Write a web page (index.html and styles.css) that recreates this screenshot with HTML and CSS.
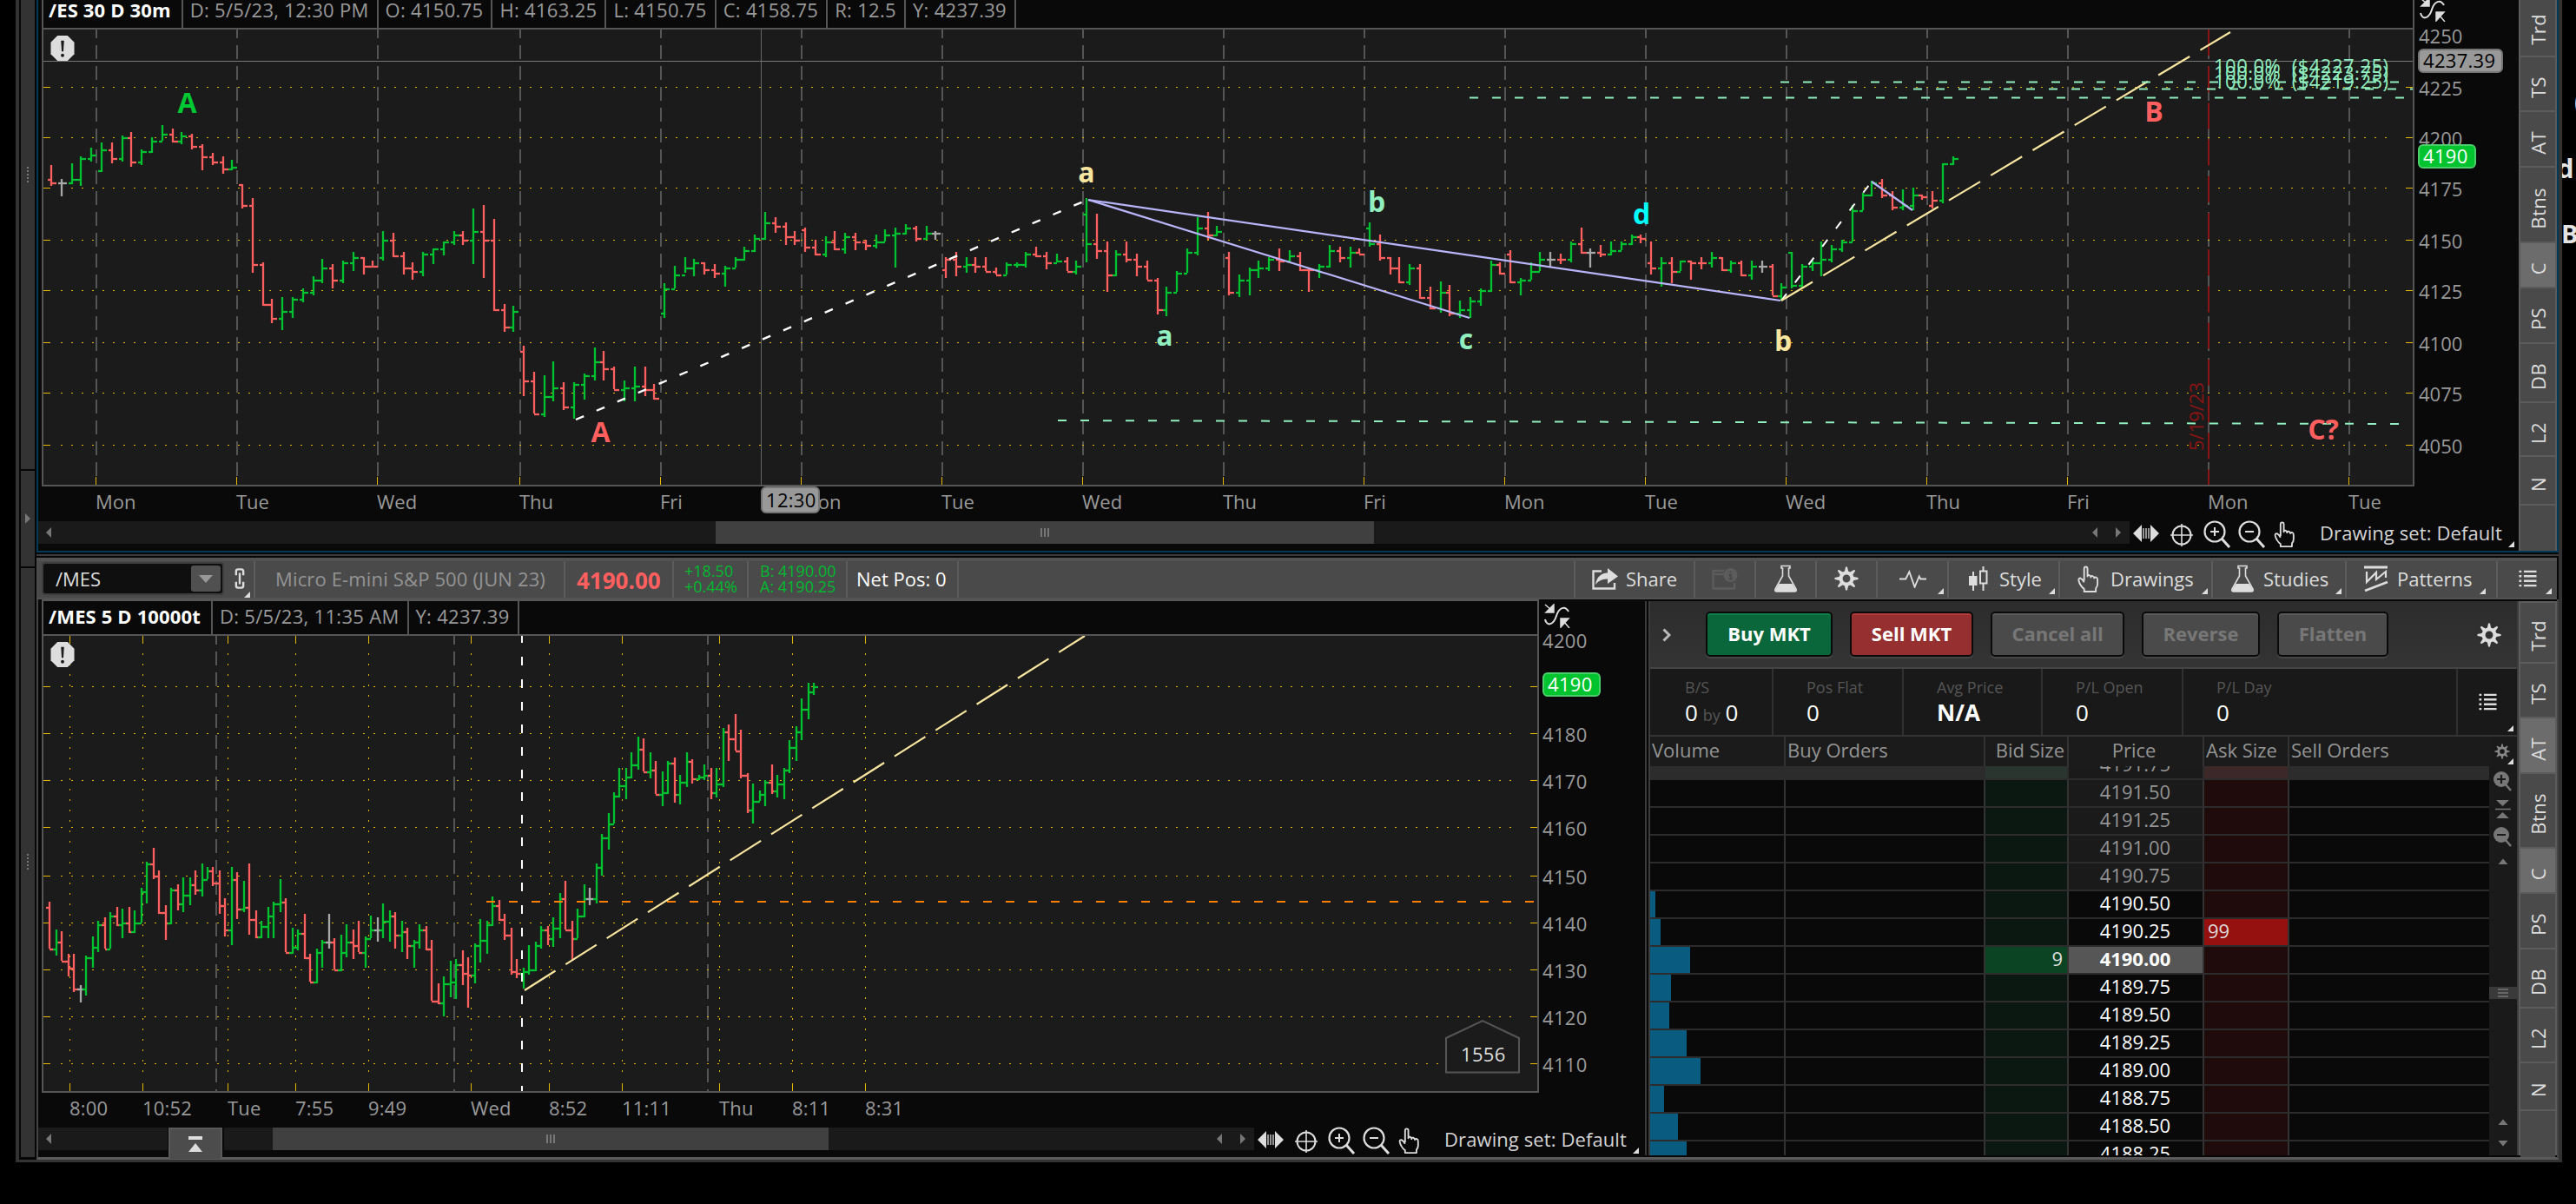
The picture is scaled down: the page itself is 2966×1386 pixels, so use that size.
FILE: index.html
```
<!DOCTYPE html>
<html lang="en">
<head>
    <meta charset="UTF-8" />
    <meta name="viewport" content="width=device-width, initial-scale=1.0">
    <title>Charts</title>
    <link rel="stylesheet" href="styles.css">
</head>
<body>
    <svg class="sprite">
        <symbol id="i-curve" viewBox="0 0 30 28">
            <path d="M1 18 C3 27 11 24 14 14 S24 2 28 9" fill="none" stroke="#ddd" stroke-width="2"/>
            <path d="M1 1 L8 7 M11 1 V10 H2 Z" fill="#ddd" stroke="#ddd" stroke-width="1.5"/>
            <path d="M29 28 L23 21 M19 17 H28 L19 27 Z" fill="#ddd" stroke="#ddd" stroke-width="1.5"/>
        </symbol>
        <symbol id="i-pan" viewBox="0 0 30 24">
            <path d="M0 12 L10 2 V22 Z M30 12 L20 2 V22 Z" fill="#ddd"/>
            <path d="M12 6 V18 M15 6 V18 M18 6 V18" stroke="#ddd" stroke-width="1.3"/>
        </symbol>
        <symbol id="i-cross" viewBox="0 0 26 26">
            <circle cx="13" cy="13" r="10.5" fill="none" stroke="#ddd" stroke-width="2"/>
            <path d="M13 0 V26 M0 13 H26" stroke="#ddd" stroke-width="1.6"/>
        </symbol>
        <symbol id="i-zin" viewBox="0 0 32 32">
            <circle cx="13" cy="13" r="11.5" fill="none" stroke="#ddd" stroke-width="2.2"/>
            <path d="M21 21 L30 31" stroke="#ddd" stroke-width="3"/>
            <path d="M13 8 V18 M8 13 H18" stroke="#ddd" stroke-width="2"/>
        </symbol>
        <symbol id="i-zout" viewBox="0 0 32 32">
            <circle cx="13" cy="13" r="11.5" fill="none" stroke="#ddd" stroke-width="2.2"/>
            <path d="M21 21 L30 31" stroke="#ddd" stroke-width="3"/>
            <path d="M8 13 H18" stroke="#ddd" stroke-width="2"/>
        </symbol>
        <symbol id="i-hand" viewBox="0 0 26 32">
            <path d="M8 18 V4 Q8 1.500 10 1.500 T12 4 V13 Q12 11 14 11.500 T16 14 Q16 12 18 12.500 T20 15 Q21 13.500 22.500 14 T24 17 V22 Q24 25 22 27 V31 H8 V28 Q3 24 1.500 18 Q1 15 3.500 15 Q6 16 8 20" fill="none" stroke="#ddd" stroke-width="2" stroke-linejoin="round"/>
        </symbol>
        <symbol id="i-flask" viewBox="0 0 28 32">
            <path d="M9 1.500 H19 V4 H17.500 V13 L26 28 Q27 31 24 31 H4 Q1 31 2 28 L10.500 13 V4 H9 Z" fill="none" stroke="#ddd" stroke-width="1.600"/>
            <path d="M6.500 22 H21.500 L26 29 Q26 31 24 31 H4 Q2 31 2 29 Z" fill="#ddd"/>
        </symbol>
        <symbol id="i-gear" viewBox="-15 -15 30 30">
            <path d="M-2.500 -8 L-1 -14.500 H1 L2.500 -8 Z" id="tooth"/>
            <use href="#tooth" transform="rotate(45)"/><use href="#tooth" transform="rotate(90)"/>
            <use href="#tooth" transform="rotate(135)"/><use href="#tooth" transform="rotate(180)"/>
            <use href="#tooth" transform="rotate(225)"/><use href="#tooth" transform="rotate(270)"/>
            <use href="#tooth" transform="rotate(315)"/>
            <circle r="7" fill="none" stroke="currentColor" stroke-width="4.500"/>
        </symbol>
        <symbol id="i-list" viewBox="0 0 22 22">
            <path d="M0 2 H3 M0 8 H3 M0 14 H3 M0 20 H3 M6 2 H22 M6 8 H22 M6 14 H22 M6 20 H22" stroke="#ddd" stroke-width="2.600"/>
        </symbol>
        <symbol id="i-alert" viewBox="0 0 28 30">
            <path d="M8 0 H20 L28 8 V22 L20 30 H8 L0 22 V8 Z" fill="#ddd"/>
            <path d="M12.200 6 H15.800 L15 19 H13 Z" fill="#1b1b1b"/>
            <circle cx="14" cy="23.500" r="2" fill="#1b1b1b"/>
        </symbol>
    </svg>

    <div class="behind">
        <span class="behind-paren">(</span>
        <span class="behind-d">d</span>
        <span class="behind-b">B</span>
    </div>

    <div class="window">
        <div class="rail">
            <div class="rail-part rail-a"><i class="grip"></i></div>
            <div class="rail-part rail-b"><i class="tri-right"></i></div>
            <div class="rail-part rail-c"><i class="grip"></i></div>
        </div>

        <div class="main">
            <div class="panel panel-es">
                <div class="chart chart-es">
                    <div class="chart-head">
                        <div class="cells">
                            <span class="cell title">/ES 30 D 30m</span>
                            <span class="cell">D: 5/5/23, 12:30 PM</span>
                            <span class="cell">O: 4150.75</span>
                            <span class="cell">H: 4163.25</span>
                            <span class="cell">L: 4150.75</span>
                            <span class="cell">C: 4158.75</span>
                            <span class="cell">R: 12.5</span>
                            <span class="cell">Y: 4237.39</span>
                        </div>
                        <svg class="curve"><use href="#i-curve"/></svg>
                    </div>
                    <svg class="plot" id="es" viewBox="44 32 2856 568"></svg>
                    <div class="foot">
                        <div class="track">
                            <i class="tri-left first"></i>
                            <div class="thumb thumb-es"><i class="grip-v"></i></div>
                            <i class="tri-left"></i><i class="tri-right"></i>
                        </div>
                        <div class="tools">
                            <svg class="pan"><use href="#i-pan"/></svg>
                            <svg class="cross"><use href="#i-cross"/></svg>
                            <svg class="zoom"><use href="#i-zin"/></svg>
                            <svg class="zoom"><use href="#i-zout"/></svg>
                            <svg class="hand"><use href="#i-hand"/></svg>
                        </div>
                        <span class="set corner">Drawing set: Default</span>
                    </div>
                </div>
                <div class="tabs tabs-es">
                    <div class="tab"><span>Trd</span></div>
                    <div class="tab"><span>TS</span></div>
                    <div class="tab"><span>AT</span></div>
                    <div class="tab"><span>Btns</span></div>
                    <div class="tab on"><span>C</span></div>
                    <div class="tab"><span>PS</span></div>
                    <div class="tab"><span>DB</span></div>
                    <div class="tab"><span>L2</span></div>
                    <div class="tab"><span>N</span></div>
                    <div class="tab"></div>
                </div>
            </div>

            <div class="splitter"></div>

            <div class="toolbar">
                <div class="tb tb-symbol">
                    <div class="symbol">/MES<span class="drop"></span></div>
                </div>
                <div class="tb tb-link corner">
                    <svg class="link" viewBox="0 0 12 26"><path d="M1.500 9 V4 Q1.500 1.500 4 1.500 H8 Q10.500 1.500 10.500 4 V9 M1.500 17 V22 Q1.500 24.500 4 24.500 H8 Q10.500 24.500 10.500 22 V17 M6 6 V20" fill="none" stroke="#ddd" stroke-width="2.600"/></svg>
                </div>
                <div class="tb tb-name">Micro E-mini S&amp;P 500 (JUN 23)</div>
                <div class="tb tb-last">4190.00</div>
                <div class="tb tb-change">+18.50<br>+0.44%</div>
                <div class="tb tb-ba">B: 4190.00<br>A: 4190.25</div>
                <div class="tb tb-pos">Net Pos: 0</div>
                <div class="tb tb-space"></div>
                <div class="tb tb-share">
                    <svg class="share" viewBox="0 0 30 25"><path d="M11 3.500 H1.500 V23.500 H26 V17" fill="none" stroke="#ddd" stroke-width="2.400"/><path d="M4 19 Q6 6 18 5.500 V0 L30 9.500 L18 18 V12.500 Q9 12 4 19 Z" fill="#ddd"/></svg>
                    Share
                </div>
                <div class="tb tb-icon">
                    <svg class="info" viewBox="0 0 30 25"><path d="M14 3 H1.500 V23.500 H26 V17 M2 7 H14" fill="none" stroke="#5c5c5c" stroke-width="2.400"/><circle cx="21.500" cy="8" r="8" fill="#5c5c5c"/><path d="M21.500 3 V5 M20 7.500 H22 V12 M19.500 12.500 H24" stroke="#4a4a4a" stroke-width="2"/></svg>
                </div>
                <div class="tb tb-icon"><svg class="flask"><use href="#i-flask"/></svg></div>
                <div class="tb tb-icon"><svg class="gear"><use href="#i-gear"/></svg></div>
                <div class="tb tb-pulse corner">
                    <svg class="pulse" viewBox="0 0 30 20"><path d="M0 10 H7 L11 2 L17 19 L22 7 L23.500 10 H30" fill="none" stroke="#ddd" stroke-width="1.800"/></svg>
                </div>
                <div class="tb tb-style corner">
                    <svg class="candles" viewBox="0 0 22 28"><path d="M5 6 V28 M16.500 0 V28" stroke="#ddd" stroke-width="2"/><rect x="0" y="11" width="9.500" height="11" fill="#ddd"/><rect x="13" y="5.500" width="7.500" height="14" fill="#4a4a4a" stroke="#ddd" stroke-width="2"/></svg>
                    Style
                </div>
                <div class="tb tb-draw corner"><svg class="hand"><use href="#i-hand"/></svg>Drawings</div>
                <div class="tb tb-studies corner"><svg class="flask"><use href="#i-flask"/></svg>Studies</div>
                <div class="tb tb-patterns corner">
                    <svg class="patt" viewBox="0 0 28 32"><path d="M0 3 H27 M1 30 L27 20" stroke="#ddd" stroke-width="2.800"/><path d="M3 8 V20 L14 9 V17 L25 8 V15" fill="none" stroke="#ddd" stroke-width="2.200"/></svg>
                    Patterns
                </div>
                <div class="tb tb-menu corner"><svg class="list"><use href="#i-list"/></svg></div>
            </div>

            <div class="bottom">
                <div class="chart chart-mes">
                    <div class="chart-head">
                        <div class="cells">
                            <span class="cell title">/MES 5 D 10000t</span>
                            <span class="cell">D: 5/5/23, 11:35 AM</span>
                            <span class="cell">Y: 4237.39</span>
                        </div>
                        <svg class="curve"><use href="#i-curve"/></svg>
                    </div>
                    <svg class="plot" id="mes" viewBox="44 730 1850 568"></svg>
                    <div class="foot">
                        <div class="track track-short"><i class="tri-left first"></i></div>
                        <div class="totop"><i></i></div>
                        <div class="track track-mes">
                            <div class="thumb thumb-mes"><i class="grip-v"></i></div>
                            <i class="tri-left"></i><i class="tri-right"></i>
                        </div>
                        <div class="tools">
                            <svg class="pan"><use href="#i-pan"/></svg>
                            <svg class="cross"><use href="#i-cross"/></svg>
                            <svg class="zoom"><use href="#i-zin"/></svg>
                            <svg class="zoom"><use href="#i-zout"/></svg>
                            <svg class="hand"><use href="#i-hand"/></svg>
                        </div>
                        <span class="set corner">Drawing set: Default</span>
                    </div>
                </div>

                <div class="trader">
                    <div class="orders">
                        <svg class="chev" viewBox="0 0 10 16"><path d="M1.500 1.500 L8 8 L1.500 14.500" fill="none" stroke="#bbb" stroke-width="3"/></svg>
                        <button class="btn buy">Buy MKT</button>
                        <button class="btn sell">Sell MKT</button>
                        <button class="btn cancel">Cancel all</button>
                        <button class="btn reverse">Reverse</button>
                        <button class="btn flatten">Flatten</button>
                        <svg class="gear"><use href="#i-gear"/></svg>
                    </div>
                    <div class="stats">
                        <div class="stat"><label>B/S</label><p>0 <small>by</small> 0</p></div>
                        <div class="stat"><label>Pos Flat</label><p>0</p></div>
                        <div class="stat"><label>Avg Price</label><p><b>N/A</b></p></div>
                        <div class="stat"><label>P/L Open</label><p>0</p></div>
                        <div class="stat"><label>P/L Day</label><p>0</p></div>
                        <div class="stat-menu corner"><svg class="list"><use href="#i-list"/></svg></div>
                    </div>
                    <div class="ladder">
                        <div class="book">
                            <div class="row head">
                                <span>Volume</span><span>Buy Orders</span><span class="r">Bid Size</span>
                                <span class="c">Price</span><span>Ask Size</span><span>Sell Orders</span>
                            </div>
                            <div class="rows" id="rows"></div>
                        </div>
                        <div class="side">
                            <div class="side-gear corner"><svg class="gear"><use href="#i-gear"/></svg></div>
                            <svg class="side-icons" viewBox="0 0 32 448">
                                <g fill="#777">
                                    <circle cx="14" cy="15" r="9"/><path d="M18 20 L25 28" stroke="#777" stroke-width="2.500"/>
                                    <path d="M8 39 H23 L15.500 46 Z M8 60 H23 L15.500 53 Z M7 48.700 H25 V50.300 H7 Z"/>
                                    <circle cx="14" cy="79" r="9"/><path d="M18 84 L25 92" stroke="#777" stroke-width="2.500"/>
                                    <path d="M10.500 113 H21.500 L16 106.500 Z M10.500 413 H21.500 L16 406.500 Z M10.500 431 H21.500 L16 437.500 Z"/>
                                </g>
                                <path d="M9 15 H19 M14 10 V20 M9 79 H19" stroke="#1a1a1a" stroke-width="2.200"/>
                                <rect x="0" y="254" width="32" height="14" fill="#3a3a3a"/>
                                <path d="M10 257 H22 M10 261 H22 M10 265 H22" stroke="#777" stroke-width="1.500"/>
                            </svg>
                        </div>
                    </div>
                </div>

                <div class="tabs tabs-mes">
                    <div class="tab"><span>Trd</span></div>
                    <div class="tab"><span>TS</span></div>
                    <div class="tab on"><span>AT</span></div>
                    <div class="tab"><span>Btns</span></div>
                    <div class="tab on"><span>C</span></div>
                    <div class="tab"><span>PS</span></div>
                    <div class="tab"><span>DB</span></div>
                    <div class="tab"><span>L2</span></div>
                    <div class="tab"><span>N</span></div>
                    <div class="tab"></div>
                </div>
            </div>
        </div>
    </div>

    <script src="charts.js"></script>
</body>
</html>
```
FILE: charts.js
```
const UP = "#00c12f", DOWN = "#ff5f5f", FLAT = "#a8a8a8";
const MINT = "#90eebf", CREAM = "#f8e6a0", LILAC = "#b9b5fa", YELLOW = "#e6b800";

function even(v) {
    return Math.round(v / 2) * 2;
}

function line(x1, y1, x2, y2, color, width, extra) {
    return `<line x1="${x1}" y1="${y1}" x2="${x2}" y2="${y2}" stroke="${color}" stroke-width="${width}" ${extra || ""}/>`;
}

function text(x, y, str, color, extra) {
    return `<text x="${x}" y="${y}" fill="${color}" ${extra || ""}>${str}</text>`;
}

function badge(x, y, w, h, str, fill, edge, color) {
    return `<rect x="${x + 1}" y="${y + 1}" width="${w - 2}" height="${h - 2}" rx="5" fill="${fill}" stroke="${edge}" stroke-width="2"/>`
        + text(x + 6, y + h / 2 + 8, str, color, 'letter-spacing=".3"');
}

// bars: [high, low, close, color?], each bar opens at the previous close
function drawBars(x0, step, open, bars, toY) {
    let out = "";
    bars.forEach((b, i) => {
        const [hi, lo, close, force] = b;
        const x = even(x0 + i * step) + 1;
        const next = even(x0 + (i + 1) * step);
        const color = force || (close < open ? UP : close > open ? DOWN : FLAT);
        const yo = even(toY(open)) + 1, yc = even(toY(close)) + 1;
        out += line(x, even(toY(hi)), x, even(toY(lo)), color, 2.3);
        out += line(x - 4, yo, x, yo, color, 2.3);
        out += line(x, yc, Math.min(next - 2, x + 6), yc, color, 2.3);
        open = close;
    });
    return out;
}

/* ---------- /ES ---------- */
const days = [
    [58, 506, [[469,527,516],[504,557,516],[464,521,506],[444,527,447],[420,459,437]]],
    [116, 482, [[402,484,422],[402,463,447],[381,459,389],[376,473,457],[422,468,427],[390,434,400],[352,400,378],[366,403,398],[376,408,385],[380,424,412],[410,483,442],[430,466,458],[440,492,476],[450,483,471]]],
    [278, 520, [[520,590,579],[562,772,745],[742,865,858],[846,914,898],[837,934,878],[840,899,844],[813,855,824],[779,835,790],[730,801,755],[748,816,790],[735,801,740],[710,767,726],[724,777,750],[738,756,751]]],
    [440, 726, [[651,736,677],[660,726,721],[710,777,755],[742,791,765],[713,781,716],[700,748,702],[680,722,682],[655,692,661],[651,694,677],[591,744,653],[577,787,677],[621,879,873],[861,939,922],[866,939,878]]],
    [602, 990, [[975,1120,1074],[1048,1169,1167],[1062,1179,1118],[1019,1135,1093],[1077,1159,1148],[1080,1184,1083],[1057,1130,1059],[980,1076,1020],[989,1076,1039],[1034,1101,1098],[1073,1135,1093],[1033,1134,1088],[1033,1120,1098],[1086,1126,1123]]],
    [764, 882, [[798,900,814],[749,816,775],[725,772,755],[730,781,740],[739,776,760],[748,787,770],[751,811,755],[725,757,731],[699,735,707],[661,712,672],[597,676,628],[612,659,638],[626,694,667],[655,694,677]]],
    [926, 647, [[642,713,697],[676,722,716],[670,727,682],[655,705,702],[660,717,667],[660,705,682],[675,709,692],[665,704,680],[650,680,661],[645,755,657,UP],[631,663,642],[636,684,672],[640,679,657],[654,676,657]]],
    [1088, 760, [[724,787,731,DOWN],[714,779,750],[725,772,745],[724,772,750],[724,768,765],[757,776,775],[740,777,745],[739,757,745,UP],[710,756,716],[699,727,721],[714,763,740],[718,742,736],[724,767,765],[738,777,750]]],
    [1250, 603, [[562,743,687,UP],[606,729,706],[680,822,775],[705,781,716],[684,742,731],[716,779,750],[738,792,790],[783,890,873],[808,895,824],[767,826,770],[700,770,711],[616,722,642],[601,679,661],[636,670,653]]],
    [1414, 725, [[714,832,824],[774,840,790],[754,836,760],[738,787,755],[724,767,731],[704,767,736],[709,740,721],[714,767,760],[755,826,760,DOWN],[744,787,750],[694,756,706],[699,740,726],[699,757,711],[704,718,716]]],
    [1576, 642, [[626,698,687,UP],[665,738,726],[724,777,755],[724,801,795],[748,806,755],[748,845,838],[812,875,868],[797,885,824],[807,893,885],[850,900,873],[841,899,848],[813,866,819],[738,822,745],[740,777,770]]],
    [1738, 716, [[709,801,795],[785,836,790],[743,792,765],[714,768,731],[714,755,731],[718,747,732],[680,740,687],[645,718,711],[700,757,711],[690,726,716],[680,722,706],[680,709,687],[664,690,667],[663,685,672]]],
    [1900, 740, [[680,777,755],[726,811,740],[726,798,765],[734,767,736],[736,791,740],[728,763,741],[710,755,726],[724,767,760],[735,772,740],[735,782,775],[738,792,750],[738,772,750],[745,836,834],[802,851,808]]],
    [2062, 711, [[710,816,804,UP],[748,814,750],[738,767,740],[684,781,731],[690,742,702],[679,712,682],[577,684,594],[545,596,550],[510,555,515],[508,561,550],[540,592,584],[533,596,578],[528,592,548],[548,567,555]]],
    [2224, 579, [[541,591,564,DOWN],[460,575,461],[441,465,447]]]
];

function drawEs() {
    let s = `<rect x="49" y="33" width="2730" height="526" fill="#1b1b1b"/>`;
    const names = ["Mon","Tue","Wed","Thu","Fri","Mon","Tue","Wed","Thu","Fri","Mon","Tue","Wed","Thu","Fri","Mon","Tue"];
    const xs = [110,272,434,598,760,922,1084,1246,1408,1570,1732,1894,2056,2218,2380,2542,2704];
    const ys = [100,158,216,276,334,394,452,512];

    xs.forEach((x, i) => {
        s += line(x + 1, 34, x + 1, 549, "#555", 2, 'stroke-dasharray="16 8" stroke-dashoffset="6"');
        s += line(x + .5, 549, x + .5, 558, YELLOW, 1);
        s += text(x, 586, names[i], "#999");
    });
    s += text(2785, 50, "4250", "#999");
    ys.forEach((y, i) => {
        s += line(50, y + .5, 58, y + .5, YELLOW, 1);
        s += line(70, y + .5, 2750, y + .5, YELLOW, 1, 'stroke-dasharray="2 10"');
        s += line(2770, y + .5, 2778, y + .5, YELLOW, 1);
        s += text(2785, y + 10, 4225 - i * 25, "#999");
    });

    s += line(50, 70.5, 2778, 70.5, "#777", 1);
    s += line(876.5, 34, 876.5, 558, "#666", 1);
    days.forEach(d => s += drawBars(d[0], 11.6, d[1], d[2], v => v / 2.45 - .5));

    // expiration
    s += line(2543, 34, 2543, 558, "#8b1414", 2, 'stroke-dasharray="30 12.200"');
    s += text(0, 0, "5/19/23", "#8b1414", 'transform="translate(2537 519) rotate(-90)"');

    // drawings
    const dash = 'stroke-dasharray="10 16"';
    s += line(663, 483, 1252, 230, "#fff", 2.4, dash);
    s += line(2051, 346, 2155, 209, "#fff", 2, dash);
    s += line(1253, 230, 1692, 366, LILAC, 2.2);
    s += line(1253, 230, 2050, 346, LILAC, 2.2);
    s += line(2155, 209, 2202, 242, LILAC, 2.2);
    s += line(2051, 346, 2568, 37, CREAM, 2.2, 'stroke-dasharray="42 14.200"');
    s += line(2050, 94.500, 2764, 94.500, MINT, 2, dash);
    s += line(2203, 102.500, 2778, 102.500, MINT, 2, dash);
    s += line(1692, 112.500, 2770, 112.500, MINT, 2, dash);
    s += line(1218, 484, 2766, 488, MINT, 2, dash);
    const wide = 'letter-spacing=".5"';
    s += text(2549, 84, "100.0%&#160;&#160;($4227.25)", MINT, wide);
    s += text(2549, 92, "100.0%&#160;&#160;($4223.75)", MINT, wide);
    s += text(2549, 102, "100.0%&#160;&#160;($4219.25)", MINT, wide);

    [[215.5,129.5,"A","#00c832"],[691.5,509,"A",DOWN],[1251,209.5,"a",CREAM],[1341,398,"a",MINT],[1585,243.5,"b",MINT],
     [1688,401.5,"c",MINT],[1890,257.5,"d","#0ff"],[2053,403.5,"b",CREAM],[2480,139.5,"B",DOWN],[2675,505.5,"C?",DOWN]]
        .forEach(w => s += text(w[0], w[1], w[2], w[3], 'class="wave"'));

    s += `<rect x="49" y="33" width="2730" height="526" fill="none" stroke="#555" stroke-width="2"/>`;
    s += badge(2784, 56, 98, 28, "4237.39", "#999", "#757575", "#000");
    s += badge(2784, 166, 67, 28, "4190", "#00c42f", "#4ccf6b", "#fff");
    s += badge(876, 560, 68, 31, "12:30", "#999", "#757575", "#000");
    s += `<use href="#i-alert" x="58" y="41" width="28" height="29"/>`;
    document.getElementById("es").innerHTML = s;
}

/* ---------- /MES ---------- */
const ticksA = [[238,400,397],[334,424,373],[340,441,439],[418,497,463],[418,550,535],[526,586,535],[424,562,427],[358,467,391],[304,412,313],[292,400,397],
    [274,400,283],[256,322,313],[262,364,307],[256,346,337],[268,346,307],[190,310,201],[100,244,103],[52,160,145],[130,280,271],[250,370,307],
    [190,316,193],[178,268,241],[154,274,211],[154,250,175],[130,214,193],[106,220,157],[118,160,129],[118,184,169],[130,280,247],[226,358,331],
    [118,388,157],[136,298,259],[166,274,253],[106,352,295],[268,364,355],[304,364,320],[256,364,283],[238,364,241],[160,274,235],[226,412,409],
    [328,418,391],[334,406,343],[280,436,427],[418,514,511],[400,520,409],[370,466,373],[280,400,373],[364,472,469],[352,478,409],[316,430,373],
    [334,436,385],[304,412,409],[358,466,361],[286,364,331],[292,376,331],[244,364,304],[268,376,283],[274,400,349],[304,412,337],[328,436,385],
    [370,466,373],[316,400,331],[322,406,397],[370,580,577],[520,592,583],[496,634,517],[442,568,511],[436,574,451],[406,526,481],[430,604,487],
    [382,520,385],[298,448,364]];
const ticksB = [[868,1018,935],[874,988,882],[790,892,816],[802,874,865],[850,936,919],[898,1060,1045],[1006,1072,1051],[1032,1108,1045],[958,1060,1040],[946,1048,955],[892,970,901],
    [892,958,931],[862,964,895],[778,934,793],[736,904,901],[874,1010,931],[832,934,853],[748,862,796],[760,820,796],[676,814,685],[574,718,583],
    [502,628,535],[430,538,441],[346,448,403],[346,454,373],[292,382,331],[238,352,277],[244,358,355],[292,382,349],[322,436,433],[358,478,427],
    [322,434,325],[310,466,433],[370,472,391],[292,412,319],[316,400,379],[370,388,373],[334,388,367],[346,454,427],[346,448,397],[208,412,217],
    [196,322,241],[160,286,283],[214,382,370],[364,502,487],[400,538,457],[424,460,433],[388,478,391],[334,436,421],[370,448,397],[346,454,349],
    [250,364,271],[202,322,217],[106,250,142],[52,178,79],[52,94,61]];

function drawMes() {
    let s = `<rect x="49" y="731" width="1722" height="526" fill="#1b1b1b"/>`;
    const xs = [80,164,262,340,424,542,632,716,828,912,996];
    const names = ["8:00","10:52","Tue","7:55","9:49","Wed","8:52","11:11","Thu","8:11","8:31"];
    const ys = [790,844,898,952,1008,1062,1116,1170,1224];

    xs.forEach((x, i) => {
        s += line(x + .5, 732, x + .5, 741, YELLOW, 1);
        s += line(x + .5, 752, x + .5, 1234, YELLOW, 1, 'stroke-dasharray="2 10"');
        s += line(x + .5, 1247, x + .5, 1256, YELLOW, 1);
        s += text(x, 1284, names[i], "#999", 'letter-spacing=".2"');
    });
    [248,522,814].forEach(x => s += line(x + 1, 732, x + 1, 1256, "#555", 2, 'stroke-dasharray="16 8" stroke-dashoffset="6"'));
    s += text(1776, 746, "4200", "#999", 'letter-spacing=".3"');
    ys.forEach((y, i) => {
        s += line(50, y + .5, 58, y + .5, YELLOW, 1);
        s += line(70, y + .5, 1742, y + .5, YELLOW, 1, 'stroke-dasharray="2 10"');
        s += line(1762, y + .5, 1770, y + .5, YELLOW, 1);
        if (i > 0) s += text(1776, y + 10, 4190 - i * 10, "#999", 'letter-spacing=".3"');
    });

    const bars = ticksA.slice(0, -1).concat([[298, 448, 367]], ticksB.slice(1).map(b => b.map(v => v - 570)));
    s += drawBars(56.4, 6.985, 253, bars, v => 960 + v / 3 - .7);

    s += line(601, 730, 601, 1256, "#fff", 2, 'stroke-dasharray="10 16"');
    s += line(560, 1038, 1770, 1038, "#ff7f00", 2, 'stroke-dasharray="10 16"');
    s += line(604, 1140, 1249, 732, CREAM, 2.2, 'stroke-dasharray="42 14"');

    s += `<path d="M1665 1234.500 V1195 L1707 1175 L1749 1195 V1234.500 Z" fill="#1b1b1b" stroke="#555" stroke-width="2"/>`;
    s += text(1682, 1222, "1556", "#ddd", 'letter-spacing=".3"');
    s += `<rect x="49" y="731" width="1722" height="526" fill="none" stroke="#555" stroke-width="2"/>`;
    s += badge(1776, 774, 67, 28, "4190", "#00c42f", "#4ccf6b", "#fff");
    s += `<use href="#i-alert" x="58" y="739" width="28" height="29"/>`;
    document.getElementById("mes").innerHTML = s;
}

/* ---------- price ladder ---------- */
function drawLadder() {
    const volume = [0, 0, 0, 0, 0, 6, 12, 46, 24, 22, 42, 58, 16, 32, 42];
    document.getElementById("rows").innerHTML = volume.map((v, i) => {
        const price = (4191.75 - i * .25).toFixed(2);
        let cls = "row";
        if (i === 0) cls += " mark";
        if (i < 5) cls += " above";
        if (price === "4190.00") cls += " last";
        if (price === "4190.25") cls += " ask";
        const bid = price === "4190.00" ? "9" : "";
        const ask = price === "4190.25" ? "99" : "";
        return `<div class="${cls}"><span><i class="vol" style="width:${v}px"></i></span><span></span>`
            + `<span class="bid-cell r">${bid}</span><span class="price-cell c">${price}</span>`
            + `<span class="ask-cell">${ask}</span><span></span></div>`;
    }).join("");
}

drawEs();
drawMes();
drawLadder();
```
FILE: styles.css
```
*{
    box-sizing: border-box;
}
body{
    margin: 0;
    background: #000;
    width: 2966px;
    height: 1386px;
    overflow: hidden;
    font-family: "Open Sans", "Noto Sans", sans-serif;
    font-size: 22px;
    color: #ddd;
}
svg{
    display: block;
    flex: none;
}
.sprite{
    position: absolute;
    width: 0;
    height: 0;
}
.behind{
    position: absolute;
    left: 2950px;
    top: 0;
    width: 16px;
    height: 300px;
    overflow: hidden;
    font-weight: bold;
    font-size: 31px;
    line-height: 40px;
    color: #e4e4e4;
}
.behind span{
    position: absolute;
    left: -6px;
}
.behind .behind-paren{
    left: 14px;
    top: 96px;
}
.behind .behind-d{
    top: 173px;
}
.behind .behind-b{
    left: -1px;
    top: 249px;
    font-size: 29px;
}

.window{
    display: flex;
    margin-left: 18px;
    width: 2932px;
    height: 1338px;
    padding-left: 2px;
    background: #070707;
    border: 4px solid #333;
    border-top: 0;
    border-bottom-width: 3px;
}
.rail{
    width: 16px;
    display: flex;
    flex-direction: column;
    gap: 2px;
    margin-right: 2px;
}
.rail-part{
    background: #333;
    display: flex;
    align-items: center;
    justify-content: center;
}
.rail-a{
    height: 540px;
    align-items: flex-start;
    padding-top: 192px;
}
.rail-b{
    height: 110px;
}
.rail-c{
    height: 678px;
    align-items: flex-start;
    padding-top: 329px;
}
.grip{
    width: 2px;
    height: 18px;
    background: repeating-linear-gradient(#777 0 2px, transparent 2px 4px);
}
.grip-v{
    width: 10px;
    height: 10px;
    background: repeating-linear-gradient(90deg, #777 0 2px, transparent 2px 4px);
}
.tri-right, .tri-left{
    border: 6px solid transparent;
    flex: none;
}
.tri-right{
    border-left-color: #777;
    border-right: 0;
}
.tri-left{
    border-right-color: #777;
    border-left: 0;
}
.main{
    width: 2904px;
    display: flex;
    flex-direction: column;
}
.panel{
    height: 636px;
    display: flex;
    border: 2px solid #003a58;
    border-top: 0;
    overflow: hidden;
    flex: none;
}

/* charts */
.chart{
    background: #090909;
    display: flex;
    flex-direction: column;
}
.chart-es{
    width: 2856px;
}
.chart-mes{
    width: 1850px;
    border-bottom: 0;
}
.chart-head{
    display: flex;
    height: 40px;
    flex: none;
    padding-left: 4px;
}
.chart-es .chart-head{
    margin-top: -8px;
}
.cells{
    display: flex;
    height: 42px;
    border: 2px solid #555;
    border-bottom: 0;
    margin-right: 6px;
}
.chart-es .cells{
    width: 2732px;
}
.chart-mes .cells{
    width: 1724px;
}
.cell{
    height: 38px;
    line-height: 34px;
    padding: 0 9px 0 8px;
    border-right: 2px solid #555;
    color: #999;
    letter-spacing: .3px;
    white-space: nowrap;
}
.cell.title{
    color: #fff;
    font-weight: bold;
    letter-spacing: .15px;
    padding: 0 12px 0 6px;
}
.curve{
    width: 30px;
    height: 28px;
    margin-top: 5px;
}
.plot{
    width: 100%;
    height: 568px;
}
.plot text{
    font-size: 22px;
}
.plot .wave{
    font-size: 32px;
    font-weight: bold;
    text-anchor: middle;
}
.foot{
    display: flex;
    height: 34px;
    flex: none;
    align-items: flex-start;
}
.track{
    width: 2408px;
    height: 26px;
    background: #1a1a1a;
    display: flex;
    align-items: center;
    padding-right: 10px;
}
.track .first{
    margin-left: 9px;
}
.track .thumb ~ .tri-right{
    margin-left: 21px;
}
.thumb{
    height: 26px;
    background: #404040;
    display: flex;
    align-items: center;
    justify-content: center;
    margin-right: auto;
}
.thumb-es{
    width: 758px;
    margin-left: 765px;
}
.track-short{
    width: 149px;
}
.totop{
    width: 62px;
    height: 36px;
    margin: 0 2px 0 1px;
    background: #4c4c4c;
    border: 2px solid #5a5a5a;
    border-bottom: 0;
    z-index: 1;
}
.totop i{
    display: block;
    width: 16px;
    margin: 8px auto 0;
    border-top: 4px solid #ddd;
}
.totop i::after{
    content: "";
    display: block;
    margin-top: 4px;
    border: 8px solid transparent;
    border-top: 0;
    border-bottom: 10px solid #ddd;
}
.track-mes{
    width: 1186px;
}
.thumb-mes{
    width: 640px;
    margin-left: 56px;
}
.tools{
    display: flex;
    height: 28px;
    align-items: center;
}
.tools svg{
    margin: 0 5px;
}
.tools .pan{
    width: 30px;
    height: 24px;
    margin: 0 6px 0 4px;
}
.tools .cross{
    width: 26px;
    height: 26px;
    margin: 4px 7px 0;
}
.tools .zoom{
    width: 32px;
    height: 32px;
    margin: 2px 3px 0 5px;
}
.tools .hand{
    width: 25px;
    height: 30px;
    margin: 2px 9px 0 6px;
}
.corner{
    position: relative;
}
.corner::after{
    content: "";
    position: absolute;
    right: 4px;
    bottom: 4px;
    border-left: 7px solid transparent;
    border-bottom: 7px solid #ddd;
}
.set{
    line-height: 26px;
    height: 26px;
    padding: 0 14px 0 19px;
    white-space: nowrap;
    color: #d4d4d4;
    letter-spacing: .1px;
}
.set::after{
    right: 0;
    bottom: -4px;
}

/* vertical tabs */
.tabs{
    width: 44px;
    display: grid;
    padding-left: 2px;
    background: #5c5c5c;
    row-gap: 2px;
}
.tabs-es{
    grid-template-rows: 64px 61px 62px 85px 50px 62px 66px 60px 54px 54px;
}
.tabs-mes{
    margin-top: 2px;
    height: 638px;
    padding-top: 2px;
    grid-template-rows: 68px 61px 62px 84px 50px 62px 66px 61px 53px 53px;
}
.tab{
    width: 40px;
    background: #4a4a4a;
    display: flex;
    align-items: center;
    justify-content: center;
}
.tab.on{
    background: #6c6c6c;
}
.tab span{
    writing-mode: vertical-rl;
    transform: rotate(180deg);
    line-height: 30px;
    margin-top: 8px;
    letter-spacing: .4px;
}
.tabs-es .tab:first-child span{
    margin-top: 3px;
}

.splitter{
    height: 6px;
    flex: none;
    border: solid #070707;
    border-width: 2px 0;
    background: #3a3a3a;
}

/* toolbar */
.toolbar{
    height: 48px;
    flex: none;
    display: flex;
    width: 2902px;
    background: #4a4a4a;
    border-top: 4px solid #525252;
    border-bottom: 2px solid #525252;
}
.tb{
    display: flex;
    align-items: center;
    border-right: 2px solid #5c5c5c;
    height: 42px;
    white-space: nowrap;
    flex: none;
    padding-bottom: 2px;
}
.tb-symbol{
    width: 216px;
    padding-left: 6px;
    border: 0;
}
.symbol{
    width: 210px;
    height: 38px;
    background: #0f0f0f;
    border: 2px solid #3d3d3d;
    border-radius: 4px;
    padding: 0 2px 0 14px;
    display: flex;
    align-items: center;
    justify-content: space-between;
    line-height: 30px;
}
.drop{
    width: 34px;
    height: 30px;
    background: #505050;
    border-radius: 3px;
    display: flex;
    align-items: center;
    justify-content: center;
}
.drop::after{
    content: "";
    border: 8px solid transparent;
    border-top: 9px solid #999;
    border-bottom: 0;
}
.tb-link{
    width: 36px;
    padding-left: 12px;
}
.tb-link::after{
    bottom: 0;
}
.link{
    width: 12px;
    height: 24px;
}
.tb-name{
    width: 357px;
    padding-left: 23px;
    color: #949494;
    letter-spacing: .15px;
}
.tb-last{
    width: 125px;
    padding: 2px 0 0 13px;
    font-size: 26px;
    font-weight: bold;
    color: #ff5f5f;
}
.tb-change, .tb-ba{
    width: 86px;
    padding-left: 12px;
    font-size: 18px;
    line-height: 18px;
    color: #00b92f;
}
.tb-ba{
    width: 114px;
    padding-left: 13px;
}
.tb-pos{
    width: 128px;
    padding-left: 10px;
    color: #fff;
}
.tb-space{
    width: 710px;
}
.tb-share{
    width: 138px;
    padding-left: 19px;
}
.share, .info{
    width: 30px;
    height: 25px;
}
.share{
    margin-right: 9px;
}
.tb-icon{
    width: 70px;
    justify-content: center;
}
.flask{
    width: 28px;
    height: 32px;
}
.gear{
    width: 28px;
    height: 28px;
    color: #ddd;
    fill: #ddd;
}
.tb-pulse{
    width: 82px;
    padding-left: 25px;
}
.pulse{
    width: 31px;
    height: 21px;
}
.tb-style{
    width: 128px;
    padding-left: 23px;
}
.candles{
    width: 22px;
    height: 28px;
    margin-right: 13px;
}
.tb-draw{
    width: 176px;
    padding-left: 20px;
}
.tb-draw .hand{
    width: 25px;
    height: 31px;
    margin-right: 13px;
}
.tb-studies{
    width: 154px;
    padding-left: 20px;
}
.tb-studies .flask{
    margin-right: 10px;
}
.tb-patterns{
    width: 174px;
    padding-left: 20px;
}
.tb-patterns::after{
    right: 12px;
}
.patt{
    width: 28px;
    height: 32px;
    margin-right: 10px;
}
.tb-menu{
    width: 66px;
    padding-left: 24px;
    border: 0;
}
.list{
    width: 21px;
    height: 20px;
}

/* bottom row */
.bottom{
    display: flex;
    height: 645px;
    flex: none;
    border-left: 2px solid #444;
    border-right: 2px solid #444;
    border-bottom: 3px solid #5a5a5a;
}
.trader{
    margin: 2px 0 0 4px;
    width: 1002px;
    height: 638px;
    border-left: 2px solid #3c3c3c;
    border-right: 2px solid #3c3c3c;
    position: relative;
}
.trader::before{
    content: "";
    position: absolute;
    left: -6px;
    top: 0;
    width: 2px;
    height: 638px;
    background: #3a3a3a;
}
.orders{
    height: 78px;
    display: flex;
    align-items: flex-start;
    padding: 12px 18px 0 14px;
    background: linear-gradient(#2c2c2c, #343434);
    border-bottom: 2px solid #444;
}
.chev{
    width: 10px;
    height: 16px;
    margin: 19px 40px 0 0;
}
.btn{
    height: 52px;
    margin-right: 20px;
    padding: 0 0 2px;
    border: 2px solid #0a0a0a;
    border-radius: 5px;
    background: #4a4a4a;
    box-shadow: inset 0 2px 0 #5a5a5a, 0 2px 0 #454545;
    font: bold 22px "Open Sans", "Noto Sans", sans-serif;
    color: #777;
}
.buy{
    width: 146px;
    background: #0a673b;
    color: #fff;
    box-shadow: inset 0 2px 0 #0f7f4a, 0 2px 0 #454545;
}
.sell{
    width: 142px;
    background: #963030;
    color: #fff;
    box-shadow: inset 0 2px 0 #b03c3c, 0 2px 0 #454545;
}
.cancel{
    width: 154px;
}
.reverse{
    width: 136px;
}
.flatten{
    width: 128px;
}
.orders .gear{
    margin: 13px 0 0 auto;
}
.stats{
    height: 78px;
    display: grid;
    grid-template-columns: 142px 150px 160px 162px 316px 68px;
    background: #191919;
    border-bottom: 2px solid #333;
}
.stat{
    border-right: 2px solid #303030;
    padding: 12px 0 0 38px;
}
.stat:first-child{
    padding-left: 40px;
}
.stat label{
    display: block;
    font-size: 18px;
    line-height: 18px;
    color: #555;
}
.stat p{
    margin: 2px 0 0;
    font-size: 26px;
    line-height: 36px;
    color: #fff;
    word-spacing: -1px;
}
.stat small{
    font-size: 18px;
    color: #555;
}
.stat-menu{
    display: flex;
    align-items: center;
    padding-left: 24px;
}
.ladder{
    display: flex;
    height: 482px;
}
.book{
    width: 966px;
}
.row{
    display: grid;
    grid-template-columns: 156px 230px 96px 156px 98px 230px;
    height: 32px;
    color: #ddd;
}
.row span{
    border-right: 2px solid #333;
    border-bottom: 2px solid #2c2c2c;
    line-height: 27px;
    padding: 0 5px 0 4px;
    background: #090909;
}
.row span:last-child{
    border-right: 0;
}
.row .r{
    text-align: right;
}
.row .c{
    text-align: center;
}
.row.head{
    height: 34px;
}
.row.head span{
    background: #1b1b1b;
    color: #949494;
    line-height: 31px;
    padding: 0 3px 0 2px;
    border-bottom: 0;
}
.row.head .c{
    padding-right: 6px;
}
.rows{
    height: 448px;
    overflow: hidden;
}
.row.mark{
    margin-top: -16px;
}
.row .bid-cell{
    background: #0b1811;
}
.row .ask-cell{
    background: #1f0a0c;
}
.row .price-cell{
    color: #fff;
}
.row.above .price-cell{
    background: #1a1a1a;
    color: #949494;
}
.row.mark span{
    background: #2c2c2c;
    border-right-color: #2c2c2c;
}
.row.mark .bid-cell{
    background: #29352e;
}
.row.mark .ask-cell{
    background: #3c2829;
}
.row.last .price-cell{
    background: #565656;
    font-weight: bold;
}
.row.last .bid-cell{
    background: #0a4423;
}
.row.ask .ask-cell{
    background: #95110f;
}
.row span:first-child{
    padding-left: 0;
}
.row.head span:first-child{
    padding-left: 2px;
}
.vol{
    display: block;
    height: 30px;
    background: #0a5b80;
}
.side{
    width: 32px;
    background: #1a1a1a;
}
.side-gear{
    height: 34px;
    padding: 8px 0 0 6px;
}
.side-gear .gear{
    width: 18px;
    height: 18px;
    color: #888;
    fill: #888;
}
.side-gear::after{
    bottom: 2px;
}
.side-icons{
    width: 32px;
    height: 448px;
}
```
